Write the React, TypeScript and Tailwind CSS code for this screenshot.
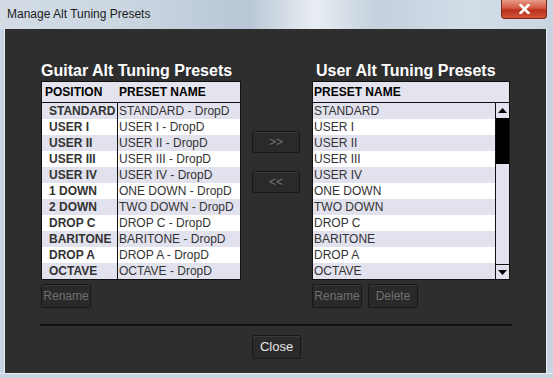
import React from "react";

const guitarRows = [
  ["STANDARD", "STANDARD - DropD"],
  ["USER I", "USER I - DropD"],
  ["USER II", "USER II - DropD"],
  ["USER III", "USER III - DropD"],
  ["USER IV", "USER IV - DropD"],
  ["1 DOWN", "ONE DOWN - DropD"],
  ["2 DOWN", "TWO DOWN - DropD"],
  ["DROP C", "DROP C - DropD"],
  ["BARITONE", "BARITONE - DropD"],
  ["DROP A", "DROP A - DropD"],
  ["OCTAVE", "OCTAVE - DropD"],
];

const userRows = [
  "STANDARD",
  "USER I",
  "USER II",
  "USER III",
  "USER IV",
  "ONE DOWN",
  "TWO DOWN",
  "DROP C",
  "BARITONE",
  "DROP A",
  "OCTAVE",
];

function DarkButton({ children, className = "", light = false }: { children: React.ReactNode; className?: string; light?: boolean }) {
  return (
    <button
      className={`flex items-center justify-center rounded-[2px] border border-[#181818] bg-[#2a2a2a] shadow-[inset_0_1px_0_#3a3a3a] ${light ? "text-[13px] text-[#e8e8e8]" : "text-[12px] text-[#707070]"} ${className}`}
    >
      {children}
    </button>
  );
}

export default function App() {
  return (
    <div className="w-[553px] h-[378px] flex flex-col overflow-hidden font-['Liberation_Sans',Arial,sans-serif] bg-[#c6d3e0]">
      {/* title bar */}
      <div className="relative h-[29px] flex items-center pl-[7px] bg-[linear-gradient(90deg,#d3dce5_0%,#ccd7e2_20%,#b9c7d6_45%,#e9eef3_57%,#c3d0dd_68%,#d2dde8_85%,#c9d5e1_100%)]">
        <span className="text-[12px] text-[#1c1c1c] -mt-[1px]">Manage Alt Tuning Presets</span>
        <div className="absolute right-[6px] top-0 w-[46px] h-[19px] rounded-b-[4px] border border-[#7a2a20] border-t-0 bg-[linear-gradient(180deg,#e89a88_0%,#d45a40_45%,#b8301c_55%,#d0553b_100%)] flex items-center justify-center">
          <svg width="11" height="10" viewBox="0 0 11 10">
            <path d="M1.5 1 L9.5 9 M9.5 1 L1.5 9" stroke="#fff" strokeWidth="2.6" strokeLinecap="square" />
          </svg>
        </div>
      </div>

      <div className="flex flex-1">
        <div className="w-[5px] border-r border-[#e6ecf2]" />
        <div className="flex-1 bg-[#2e2e2e] flex flex-col">
          <div className="flex pt-[33px] pl-[36px]">
            {/* left panel */}
            <div className="w-[200px] flex flex-col">
              <div className="h-[18px] leading-[18px] text-[16px] font-bold text-white">Guitar Alt Tuning Presets</div>
              <div className="h-[199px] mt-[1px] border border-[#111] bg-white flex flex-col">
                <div className="h-[21px] flex border-b border-[#111] bg-[#e4e4ee] text-[12px] font-bold text-black">
                  <div className="w-[76px] pl-[3px] flex items-center">POSITION</div>
                  <div className="pl-[1px] flex items-center">PRESET NAME</div>
                </div>
                {guitarRows.map(([pos, name], i) => (
                  <div key={pos} className={`h-[16px] flex text-[12px] text-[#333] ${i % 2 === 0 ? "bg-[#e2e2ee]" : "bg-white"}`}>
                    <div className="w-[76px] pl-[7px] border-r border-[#111] font-bold overflow-hidden whitespace-nowrap leading-[17px]">{pos}</div>
                    <div className="pl-[1px] whitespace-nowrap leading-[17px]">{name}</div>
                  </div>
                ))}
              </div>
              <DarkButton className="mt-[4px] w-[50px] h-[24px]">Rename</DarkButton>
            </div>

            {/* move buttons */}
            <div className="ml-[11px] w-[48px] pt-[69px] flex flex-col gap-[18px]">
              <DarkButton className="w-[48px] h-[22px] text-[#8a8a8a]">&gt;&gt;</DarkButton>
              <DarkButton className="w-[48px] h-[22px] text-[#8a8a8a]">&lt;&lt;</DarkButton>
            </div>

            {/* right panel */}
            <div className="ml-[12px] w-[198px] flex flex-col">
              <div className="h-[18px] leading-[18px] text-[16px] font-bold text-white pl-[4px]">User Alt Tuning Presets</div>
              <div className="h-[199px] mt-[1px] border border-[#111] bg-white flex flex-col">
                <div className="h-[21px] flex items-center border-b border-[#111] bg-[#e4e4ee] text-[12px] font-bold text-black pl-[1px]">
                  PRESET NAME
                </div>
                <div className="flex flex-1">
                  <div className="w-[182px] flex flex-col">
                    {userRows.map((name, i) => (
                      <div key={name} className={`h-[16px] leading-[17px] pl-[1px] text-[12px] text-[#333] ${i % 2 === 0 ? "bg-[#e2e2ee]" : "bg-white"}`}>
                        {name}
                      </div>
                    ))}
                  </div>
                  <div className="flex-1 border-l border-[#111] bg-[#e2e2ee] flex flex-col">
                    <div className="h-[15px] flex items-center justify-center">
                      <svg width="9" height="5" viewBox="0 0 9 5"><path d="M4.5 0 L9 5 L0 5 Z" fill="#000" /></svg>
                    </div>
                    <div className="h-[46px] bg-black" />
                    <div className="flex-1" />
                    <div className="h-[15px] border-t border-[#111] flex items-center justify-center">
                      <svg width="9" height="5" viewBox="0 0 9 5"><path d="M0 0 L9 0 L4.5 5 Z" fill="#000" /></svg>
                    </div>
                  </div>
                </div>
              </div>
              <div className="mt-[4px] flex gap-[6px]">
                <DarkButton className="w-[50px] h-[24px]">Rename</DarkButton>
                <DarkButton className="w-[50px] h-[24px]">Delete</DarkButton>
              </div>
            </div>
          </div>

          <div className="mt-[16px] ml-[35px] w-[472px] h-[2px] bg-[#101010]" />
          <div className="mt-[9px] flex justify-center pl-[2px]">
            <DarkButton light className="w-[49px] h-[24px]">Close</DarkButton>
          </div>
        </div>
        <div className="w-[7px] border-l border-[#e6ecf2]" />
      </div>
      <div className="h-[5px] border-t border-[#e6ecf2]" />
    </div>
  );
}
